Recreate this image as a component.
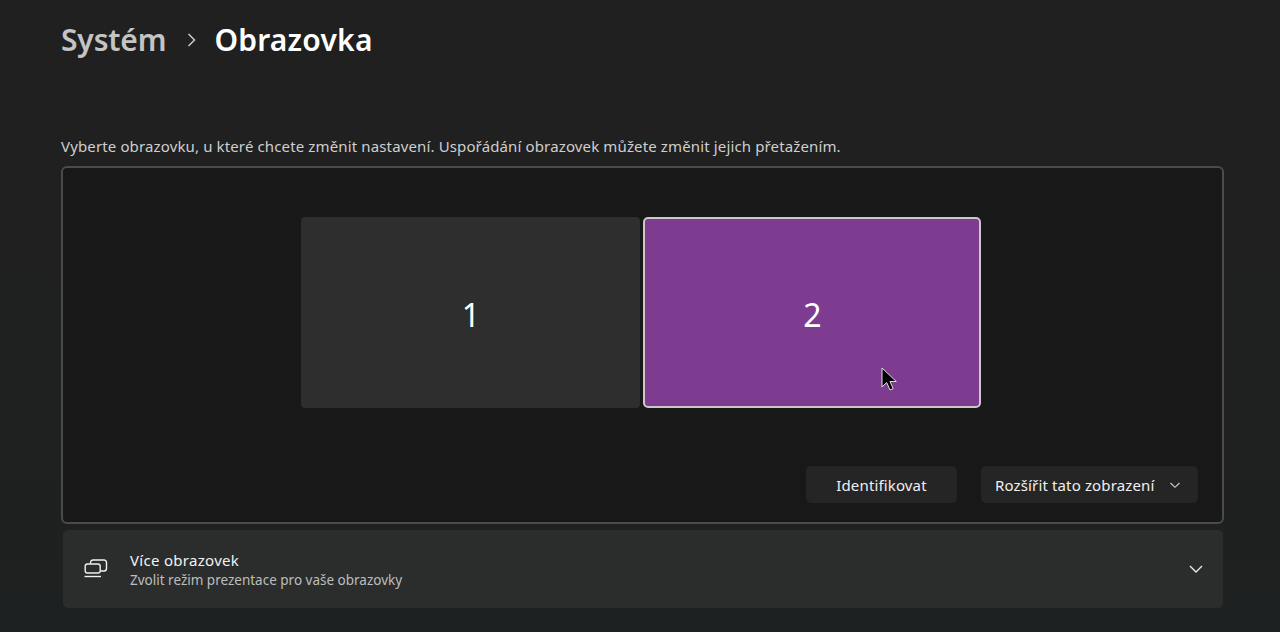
<style>
:global(body) { margin: 0; background: #202020; }
.page {
  width: 1280px; height: 632px; box-sizing: border-box; overflow: hidden;
  padding: 18px 56px 0 61px;
  background: linear-gradient(180deg, #202020 0%, #202020 40%, #1e2121 100%);
  font-family: "Noto Sans", "Open Sans", sans-serif; color: #fff;
}
.crumbs { display: flex; align-items: center; height: 44px; font-size: 30px; font-weight: 600; line-height: 44px; }
.parent { color: #c4c4c4; letter-spacing: -0.15px; }
.cur { letter-spacing: 0.22px; }
.sep { width: 12px; height: 16px; margin: 0 16px 0 20px; }
.hint { margin: 74px 0 0; height: 20px; font-size: 15px; letter-spacing: 0.135px; line-height: 20px; color: #cfcfcf; }
.stage {
  margin-top: 10px; height: 358px; box-sizing: border-box; position: relative;
  background: #181818; border: 2px solid #4b4b4b; border-radius: 6px;
  display: flex; flex-direction: column;
}
.monitors { display: flex; justify-content: center; gap: 3px; padding: 49px 4px 0 0; }
.mon {
  width: 339px; height: 191px; box-sizing: border-box; border-radius: 4px; padding: 4px 0 0 2px;
  display: flex; align-items: center; justify-content: center;
  background: #2e2e2e; font-size: 32px; color: #fff;
}
.mon.sel { width: 338px; background: #7d3c8f; border: 2px solid #cbc7cb; border-radius: 5px; position: relative; }
.cursor { position: absolute; left: 236px; top: 148px; }
.actions { display: flex; justify-content: flex-end; gap: 24px; margin-top: 58px; padding-right: 24px; }
.btn {
  height: 37px; box-sizing: border-box; background: #252525; border-radius: 5px;
  display: flex; align-items: center; font-size: 15px; letter-spacing: 0.14px; color: #f0f0f0; font-family: inherit;
}
.id { width: 151px; justify-content: center; }
.dd { width: 217px; padding-left: 14px; justify-content: space-between; padding-right: 17px; }
.row {
  margin: 6px 1px 0 2px; height: 78px; box-sizing: border-box; background: #2b2d2d; border-radius: 5px;
  display: flex; align-items: center; padding: 0 19px 0 21px;
}
.ico { width: 24px; height: 20px; margin-right: 22px; flex: none; }
.txt { flex: 1; padding-top: 2px; }
.t1 { font-size: 15px; letter-spacing: 0.3px; line-height: 20px; color: #f2f2f2; }
.t2 { font-size: 13.500px; line-height: 20px; color: #bdbdbd; }
</style>

<div class="page">
  <div class="crumbs">
    <span class="parent">Systém</span>
    <svg class="sep" viewBox="0 0 12 16" fill="none" stroke="#c4c4c4" stroke-width="1.600"><path d="M2.500 2 8.500 8l-6 6"/></svg>
    <span class="cur">Obrazovka</span>
  </div>
  <p class="hint">Vyberte obrazovku, u které chcete změnit nastavení. Uspořádání obrazovek můžete změnit jejich přetažením.</p>
  <div class="stage">
    <div class="monitors">
      <div class="mon">1</div>
      <div class="mon sel">2
        <svg class="cursor" width="16" height="25" viewBox="0 0 16 25"><path d="M1 1v19l4.700-4.500 3.300 7.500 3.200-1.400-3.200-7.100h6.300z" fill="#000" stroke="#e0dce0" stroke-width="1"/></svg>
      </div>
    </div>
    <div class="actions">
      <div class="btn id">Identifikovat</div>
      <div class="btn dd">Rozšířit tato zobrazení
        <svg width="12" height="12" viewBox="0 0 12 12" fill="none" stroke="#d0d0d0" stroke-width="1.100"><path d="M1.500 4 6 8.300 10.500 4"/></svg>
      </div>
    </div>
  </div>
  <div class="row">
    <svg class="ico" viewBox="0 0 24 20" fill="none" stroke="#f0f0f0" stroke-width="1.400">
      <path d="M6.500 4.500V3.500a2.500 2.500 0 0 1 2.500-2.500h11a2.500 2.500 0 0 1 2.500 2.500v6a2.500 2.500 0 0 1-2.500 2.500h-3.500"/>
      <rect x="1.200" y="5" width="15" height="9" rx="2.200"/>
      <path d="M0.500 17.500h16.500"/>
    </svg>
    <div class="txt">
      <div class="t1">Více obrazovek</div>
      <div class="t2">Zvolit režim prezentace pro vaše obrazovky</div>
    </div>
    <svg width="16" height="16" viewBox="0 0 16 16" fill="none" stroke="#e8e8e8" stroke-width="1.400"><path d="M2 5l6 6 6-6"/></svg>
  </div>
</div>
